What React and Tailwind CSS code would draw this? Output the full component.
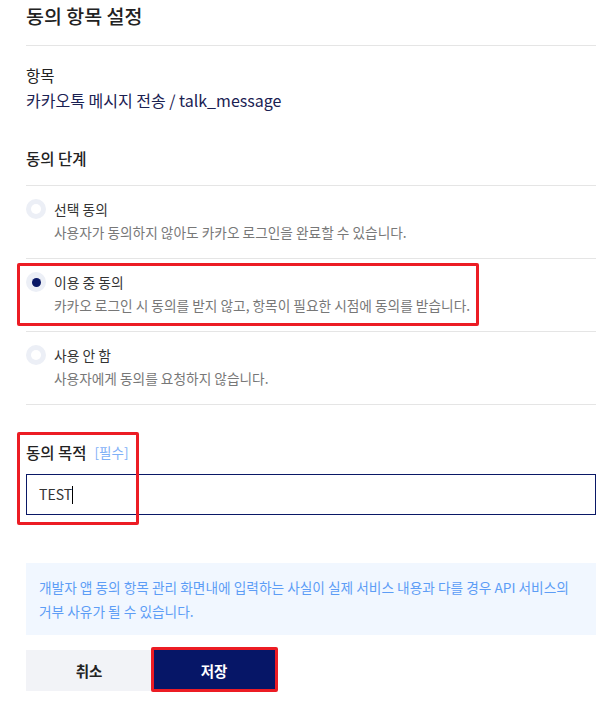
import React from "react";

const options = [
  {
    label: "선택 동의",
    desc: "사용자가 동의하지 않아도 카카오 로그인을 완료할 수 있습니다.",
    checked: false,
  },
  {
    label: "이용 중 동의",
    desc: "카카오 로그인 시 동의를 받지 않고, 항목이 필요한 시점에 동의를 받습니다.",
    checked: true,
  },
  {
    label: "사용 안 함",
    desc: "사용자에게 동의를 요청하지 않습니다.",
    checked: false,
  },
];

function Radio({ checked }) {
  return (
    <div className="w-[20px] h-[20px] rounded-full bg-[#eceff6] flex items-center justify-center shrink-0">
      {checked ? (
        <div className="w-[9px] h-[9px] rounded-full bg-[#0a1866]" />
      ) : (
        <div className="w-[10px] h-[10px] rounded-full bg-white" />
      )}
    </div>
  );
}

export default function App() {
  return (
    <div
      className="relative w-[606px] min-h-[717px] bg-white"
      style={{ fontFamily: '"Noto Sans CJK KR", "Noto Sans", sans-serif' }}
    >
      <div className="ml-[26px] w-[570px]">
        {/* Title */}
        <div className="h-[46px] border-b border-[#e5e5e5] pt-[3px]">
          <h1 className="text-[19.5px] leading-[26px] font-medium text-[#222]">동의 항목 설정</h1>
        </div>

        {/* Item */}
        <div className="pt-[18px]">
          <div className="text-[15.5px] leading-[22px] text-[#222]">항목</div>
          <div className="mt-[3px] text-[16px] leading-[22px] text-[#1a2152]">
            카카오톡 메시지 전송 / talk_message
          </div>
        </div>

        {/* Consent level */}
        <div className="mt-[36px] pb-[16px] border-b border-[#e5e5e5]">
          <div className="text-[15.5px] leading-[22px] font-medium text-[#222]">동의 단계</div>
        </div>

        {options.map((opt) => (
          <div key={opt.label} className="pt-[13px] pb-[16px] border-b border-[#e5e5e5]">
            <div className="flex items-center gap-[8px]">
              <Radio checked={opt.checked} />
              <span className="text-[13.8px] leading-[20px] text-[#333]">{opt.label}</span>
            </div>
            <div className="mt-[3px] pl-[28px] text-[13.7px] leading-[20px] text-[#777]">{opt.desc}</div>
          </div>
        ))}

        {/* Purpose */}
        <div className="mt-[36px] flex items-center gap-[8px]">
          <span className="text-[15.5px] leading-[22px] font-medium text-[#222]">동의 목적</span>
          <span className="text-[13.5px] leading-[22px] text-[#7fb0f7]">[필수]</span>
        </div>
        <div className="mt-[11px] h-[41px] border border-[#0a1866] flex items-center px-[12px]">
          <span className="text-[14px] text-[#333]">TEST</span>
          <span className="w-px h-[18px] bg-black" />
        </div>

        {/* Notice */}
        <div className="mt-[48px] bg-[#f1f7ff] px-[13px] py-[12px] text-[13.7px] leading-[24px] text-[#5d9df6]">
          개발자 앱 동의 항목 관리 화면내에 입력하는 사실이 실제 서비스 내용과 다를 경우 API 서비스의 거부 사유가 될 수
          있습니다.
        </div>

        {/* Buttons */}
        <div className="mt-[15px] flex">
          <button className="w-[126px] h-[41px] bg-[#f2f3f7] text-[14.5px] font-bold text-[#222]">취소</button>
          <button className="w-[124px] h-[41px] bg-[#061667] text-[14.5px] font-bold text-white">저장</button>
        </div>
      </div>

      {/* Highlight annotations */}
      <div className="absolute left-[17px] top-[263px] w-[462px] h-[63px] border-[3px] border-[#ec1c24] rounded-[2px] pointer-events-none" />
      <div className="absolute left-[17px] top-[432px] w-[122px] h-[93px] border-[3px] border-[#ec1c24] rounded-[2px] pointer-events-none" />
      <div className="absolute left-[151px] top-[647px] w-[127px] h-[45px] border-[3px] border-[#ec1c24] rounded-[2px] pointer-events-none" />
    </div>
  );
}
